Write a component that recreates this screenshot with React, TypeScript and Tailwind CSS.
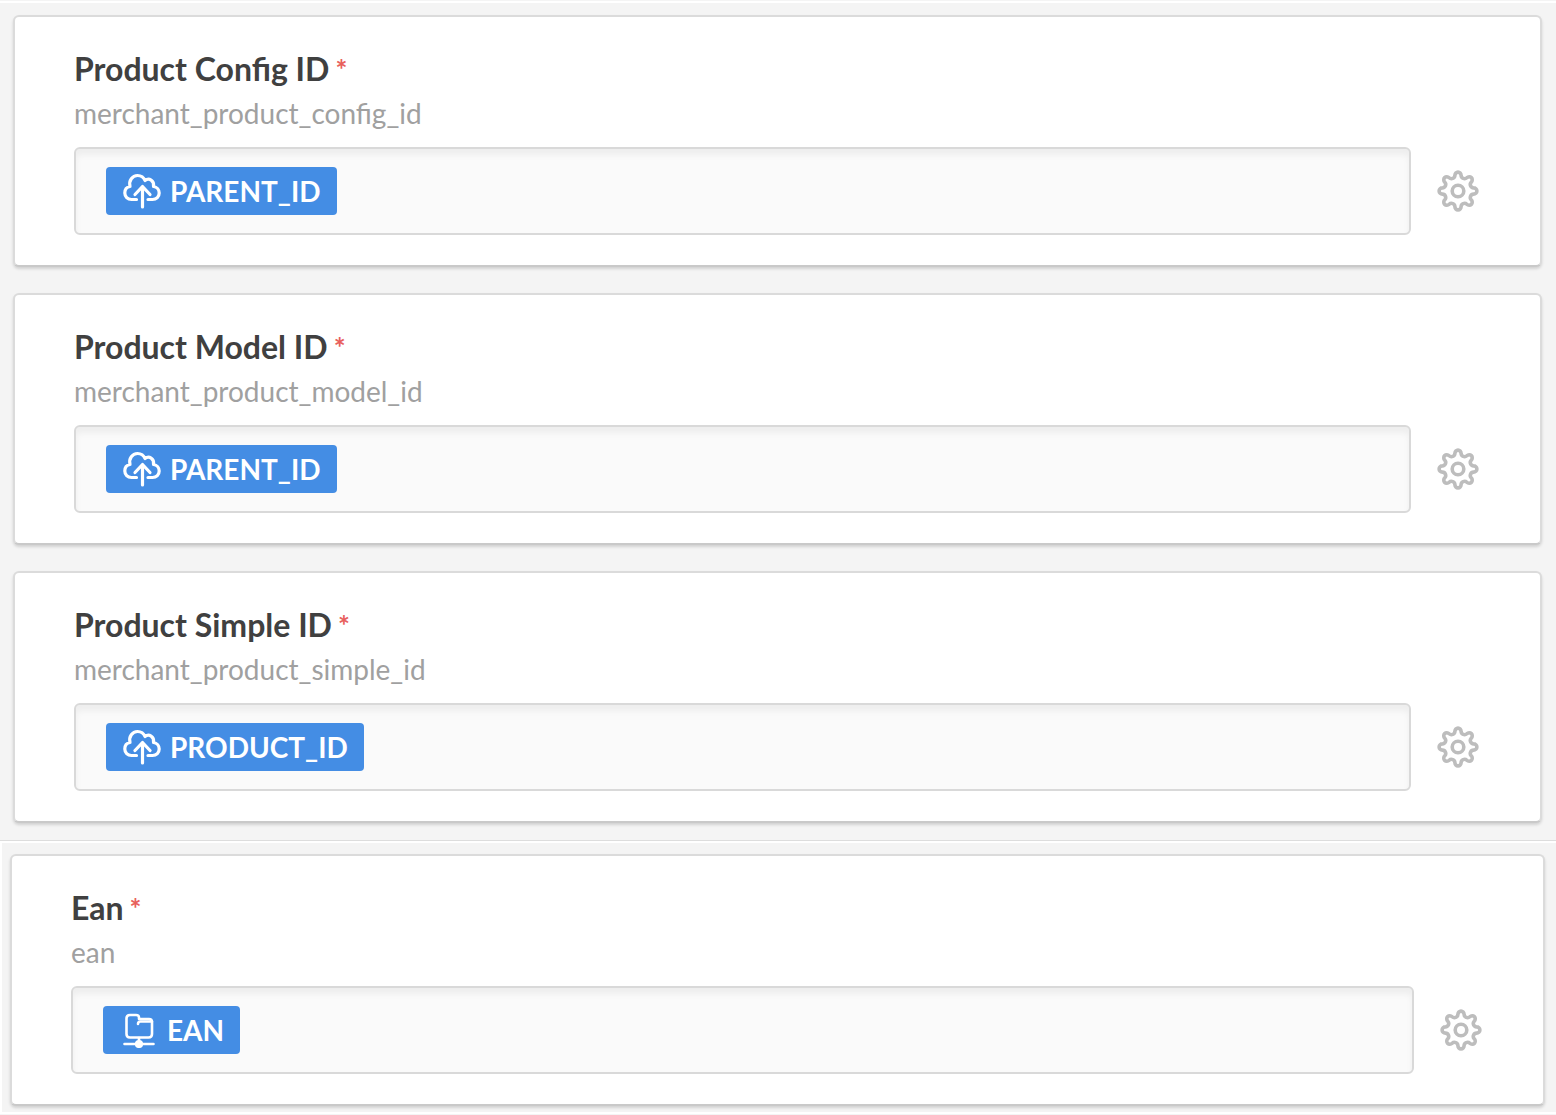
import { clsx } from "clsx";

type IconName = "cloud" | "folder";

interface Field {
  id: string;
  title: string;
  tag: string;
  icon: IconName;
}

const productFields: Field[] = [
  { id: "merchant_product_config_id", title: "Product Config ID", tag: "PARENT_ID", icon: "cloud" },
  { id: "merchant_product_model_id", title: "Product Model ID", tag: "PARENT_ID", icon: "cloud" },
  { id: "merchant_product_simple_id", title: "Product Simple ID", tag: "PRODUCT_ID", icon: "cloud" },
];

const eanField: Field = { id: "ean", title: "Ean", tag: "EAN", icon: "folder" };

// eight round teeth joined by round notches
function gearPath() {
  let d = "";
  for (let i = 0; i < 16; i++) {
    const angle = ((i * 22.5 - 101.25) * Math.PI) / 180;
    const x = (21 + 15.9 * Math.cos(angle)).toFixed(2);
    const y = (21 + 15.9 * Math.sin(angle)).toFixed(2);
    if (i === 0) d += `M${x} ${y}`;
    else d += i % 2 ? `A3.1 3.3 ${i * 22.5 - 22.5} 0 1 ${x} ${y}` : `A3.4 3.4 0 0 0 ${x} ${y}`;
  }
  return d + "A3.4 3.4 0 0 0 " + d.slice(1, d.indexOf("A")) + "Z";
}

const gear = gearPath();

function GearIcon() {
  return (
    <svg viewBox="0 0 42 42" className="size-[42px]" fill="none" stroke="currentColor" strokeWidth="3.6" strokeLinejoin="round">
      <path d={gear} />
      <circle cx="21" cy="21" r="5.8" />
    </svg>
  );
}

function CloudUploadIcon() {
  return (
    <svg viewBox="0 0 40 36" className="h-9 w-10" fill="none" stroke="currentColor" strokeWidth="3.2" strokeLinecap="round" strokeLinejoin="round">
      <path d="M14.5 26.5H9.5C5.5 26.5 2.8 23.5 2.8 20C2.8 16.5 5 14 8 13.5C6.500 7.500 10.500 2.500 15.500 2.500C19 2.500 21.800 4.500 23 7.500C27 4.500 32.500 7.500 31.500 13.500C35 14 37.200 16.800 37.200 20C37.200 23.500 34.500 26.500 30.500 26.500H26" />
      <path d="M20.500 34V14.500M13 21.500L20.500 13.500L28 21.500" />
    </svg>
  );
}

function FolderIcon() {
  return (
    <svg viewBox="0 0 40 36" className="h-9 w-10" fill="none" stroke="currentColor" strokeWidth="2.6" strokeLinecap="round" strokeLinejoin="round">
      <path d="M11 3H17C19 3 20 4 20 5.500V7H30C32 7 33 8 33 10V22C33 24.500 32 25.500 29.500 25.500H11C8.500 25.500 7.500 24.500 7.500 22V6.500C7.500 4 8.500 3 11 3Z" />
      <path d="M33 9.500H21.500C19.800 9.500 19 10.300 19 12" />
      <path d="M20 26V31M5.500 32H34.500" />
      <circle cx="20" cy="32" r="2.800" fill="currentColor" />
    </svg>
  );
}

function FieldCard({ field }: { field: Field }) {
  return (
    <div className="rounded-md border-2 border-[#dbdbdb] border-b-[#c9c9c9] bg-white pt-8 pr-[61px] pb-[30px] pl-[59px] shadow-[0_2px_3px_rgba(0,0,0,0.14)]">
      <label htmlFor={field.id} className="flex gap-1.5 text-[32px] leading-10 font-bold text-[#404040]">
        {field.title}
        <span className="text-[28px] text-[#e8605c]">*</span>
      </label>
      <p className="mt-1.5 text-[28px] leading-9 text-[#a0a0a0]">{field.id}</p>

      <div className="mt-4 flex items-center gap-[26px]">
        <div className="flex h-[88px] min-w-0 flex-1 items-center rounded-md border-2 border-[#d9d9d9] bg-[#fafafa] px-[30px] shadow-[inset_0_6px_6px_rgba(0,0,0,0.05)]">
          <span className="flex h-12 shrink-0 items-center gap-2 rounded bg-[#448de4] px-4 text-[28px] leading-9 font-bold text-white">
            {field.icon === "cloud" ? <CloudUploadIcon /> : <FolderIcon />}
            {field.tag}
          </span>
          <input id={field.id} type="text" className="min-w-0 flex-1 bg-transparent px-3 text-[28px] outline-none" />
        </div>
        <button type="button" aria-label={`${field.title} settings`} className="shrink-0 text-[#bdbdbd] hover:text-[#8c8c8c]">
          <GearIcon />
        </button>
      </div>
    </div>
  );
}

function Section({ fields, wide }: { fields: Field[]; wide?: boolean }) {
  return (
    <section
      className={clsx(
        "flex flex-col gap-[26px] bg-[#f4f4f4]",
        wide
          ? "border-y-2 border-l-2 border-white pt-[11px] pr-[11px] pb-1.5 pl-2"
          : "border-b border-[#dddddd] pt-3 pr-3.5 pb-[17px] pl-[13px]"
      )}
    >
      {fields.map((field) => (
        <FieldCard key={field.id} field={field} />
      ))}
    </section>
  );
}

export default function App() {
  return (
    <main className="min-h-screen bg-[#f4f4f4] pt-px font-['Lato',sans-serif]">
      <div className="h-0.5 bg-white" />
      <Section fields={productFields} />
      <Section fields={[eanField]} wide />
    </main>
  );
}
